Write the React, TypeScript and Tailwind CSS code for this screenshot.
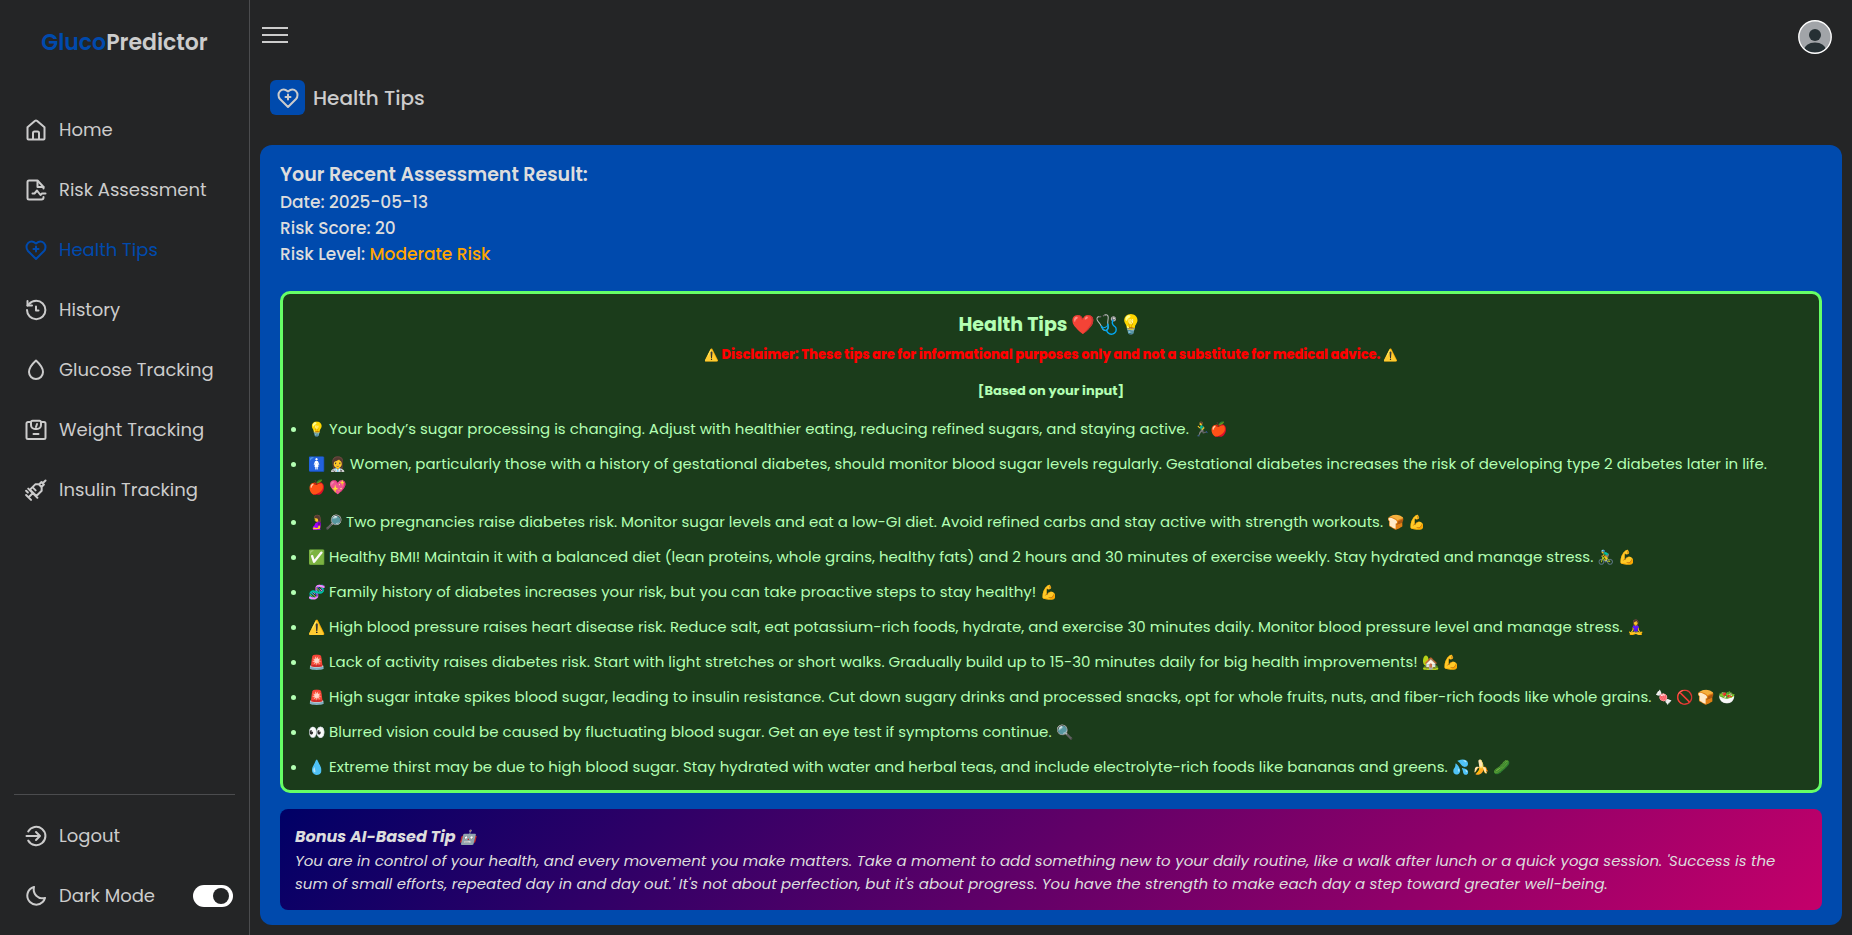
import { useState } from "react";
import type { ReactNode } from "react";
import { BiMoon } from "react-icons/bi";

function Icon({ children, className = "size-6" }: { children: ReactNode; className?: string }) {
  return (
    <svg
      viewBox="0 0 24 24"
      className={className}
      fill="none"
      stroke="currentColor"
      strokeWidth="2"
      strokeLinecap="round"
      strokeLinejoin="round"
      aria-hidden="true"
    >
      {children}
    </svg>
  );
}

const HomeIcon = () => (
  <Icon>
    <path d="M3.500 9.300 10.800 3a1.800 1.800 0 0 1 2.400 0l7.300 6.300V20.500a1 1 0 0 1-1 1h-15a1 1 0 0 1-1-1z" />
    <path d="M9 21v-6a1.500 1.500 0 0 1 1.500-1.500h3A1.500 1.500 0 0 1 15 15v6" />
  </Icon>
);

const RiskIcon = () => (
  <Icon>
    <path d="M19.500 10.500V9l-6-6.500H5A1.500 1.500 0 0 0 3.500 4v16A1.500 1.500 0 0 0 5 21.500h12.500a2 2 0 0 0 2-2V19" />
    <path d="M13.500 3v6h6" />
    <path d="M8.500 15.500h2l2.500-3 3.500 4.500 1.500-1.500h3.500" />
  </Icon>
);

const HeartPlusIcon = ({ className }: { className?: string }) => (
  <Icon className={className}>
    <path d="M12 21 4 13a5.800 5.800 0 0 1-1.500-4c0-3 2.300-5.500 5.200-5.500 1.700 0 2.800.8 4.300 2 1.500-1.200 2.600-2 4.300-2 2.900 0 5.200 2.500 5.200 5.500a5.800 5.800 0 0 1-1.500 4z" />
    <path d="M12 8.500v5M9.500 11h5" />
  </Icon>
);

const HistoryIcon = () => (
  <Icon>
    <path d="M3 12a9.200 9.200 0 1 0 9.200-9.200A9.700 9.700 0 0 0 5 6L3.500 7.500" />
    <path d="M3.500 3v4.500H8" />
    <path d="M12 8.500v4h2.500" />
  </Icon>
);

const DropIcon = () => (
  <Icon>
    <path d="M12 2.500c3 2.700 7 7.300 7 11.500a7 7 0 0 1-14 0c0-4.200 4-8.800 7-11.500z" />
  </Icon>
);

const ScaleIcon = () => (
  <Icon>
    <path d="M7 4H4a1.500 1.500 0 0 0-1.500 1.500v14A1.500 1.500 0 0 0 4 21h16a1.500 1.500 0 0 0 1.500-1.500v-14A1.500 1.500 0 0 0 20 4h-3" />
    <path d="M8.500 2.700h7a1.500 1.500 0 0 1 1.500 1.500V7a4 4 0 0 1-4 4h-2a4 4 0 0 1-4-4V4.200a1.500 1.500 0 0 1 1.500-1.500z" />
    <path d="m12 9 1-3M9.500 16h5" />
  </Icon>
);

const SyringeIcon = () => (
  <Icon>
    <g transform="rotate(45 12 12)">
      <path d="M12-1.500v4M10.300 2.500h3.400V6h-3.400zM7.500 8.500 10 6h4l2.500 2.500V16h-9zM12 16v6M8.500 22.500h7M5.500 16.500h13M8.500 12.500h3.500M5.500 19.500h2.500" />
    </g>
  </Icon>
);

const LogoutIcon = () => (
  <Icon>
    <path d="M4.200 7.500a9.200 9.200 0 1 1 0 9" />
    <path d="M2.500 12H16M12 8l4 4-4 4" />
  </Icon>
);

const navItems = [
  { label: "Home", icon: <HomeIcon /> },
  { label: "Risk Assessment", icon: <RiskIcon /> },
  { label: "Health Tips", icon: <HeartPlusIcon />, active: true },
  { label: "History", icon: <HistoryIcon /> },
  { label: "Glucose Tracking", icon: <DropIcon /> },
  { label: "Weight Tracking", icon: <ScaleIcon /> },
  { label: "Insulin Tracking", icon: <SyringeIcon /> },
];

const tips = [
  {
    lead: "💡",
    text: "Your body’s sugar processing is changing. Adjust with healthier eating, reducing refined sugars, and staying active.",
    tail: "🏃‍♂️🍎",
  },
  {
    lead: "🚺 👩‍⚕️",
    text: "Women, particularly those with a history of gestational diabetes, should monitor blood sugar levels regularly. Gestational diabetes increases the risk of developing type 2 diabetes later in life.",
    tail: "🍎 💖",
  },
  {
    lead: "🤰🔎",
    text: "Two pregnancies raise diabetes risk. Monitor sugar levels and eat a low-GI diet. Avoid refined carbs and stay active with strength workouts.",
    tail: "🍞 💪",
  },
  {
    lead: "✅",
    text: "Healthy BMI! Maintain it with a balanced diet (lean proteins, whole grains, healthy fats) and 2 hours and 30 minutes of exercise weekly. Stay hydrated and manage stress.",
    tail: "🚴‍♂️ 💪",
  },
  {
    lead: "🧬",
    text: "Family history of diabetes increases your risk, but you can take proactive steps to stay healthy!",
    tail: "💪",
  },
  {
    lead: "⚠️",
    text: "High blood pressure raises heart disease risk. Reduce salt, eat potassium-rich foods, hydrate, and exercise 30 minutes daily. Monitor blood pressure level and manage stress.",
    tail: "🧘‍♀️",
  },
  {
    lead: "🚨",
    text: "Lack of activity raises diabetes risk. Start with light stretches or short walks. Gradually build up to 15-30 minutes daily for big health improvements!",
    tail: "🏡 💪",
  },
  {
    lead: "🚨",
    text: "High sugar intake spikes blood sugar, leading to insulin resistance. Cut down sugary drinks and processed snacks, opt for whole fruits, nuts, and fiber-rich foods like whole grains.",
    tail: "🍬 🚫 🍞 🥗",
  },
  {
    lead: "👀",
    text: "Blurred vision could be caused by fluctuating blood sugar. Get an eye test if symptoms continue.",
    tail: "🔍",
  },
  {
    lead: "💧",
    text: "Extreme thirst may be due to high blood sugar. Stay hydrated with water and herbal teas, and include electrolyte-rich foods like bananas and greens.",
    tail: "💦 🍌 🥒",
  },
];

function Emoji({ children }: { children: ReactNode }) {
  return <span className="whitespace-nowrap text-sm leading-none">{children}</span>;
}

function Sidebar() {
  const [dark, setDark] = useState(true);
  return (
    <aside className="flex w-[250px] shrink-0 flex-col border-r border-[#4b4c4e]">
      <div className="flex h-[84px] items-center justify-center text-[22px] font-semibold">
        <span className="text-[#004aad]">Gluco</span>
        <span>Predictor</span>
      </div>
      <nav className="mt-4 grow">
        <ul>
          {navItems.map((item) => (
            <li key={item.label}>
              <a
                href="#"
                className={
                  item.active
                    ? "flex h-[60px] items-center gap-[11px] pl-6 text-lg text-[#004aad]"
                    : "flex h-[60px] items-center gap-[11px] pl-6 text-lg"
                }
              >
                {item.icon}
                {item.label}
              </a>
            </li>
          ))}
        </ul>
      </nav>
      <div className="mx-[14px] border-t border-[#4b4c4e] pt-[11px] pb-[9px]">
        <a href="#" className="flex h-[60px] items-center gap-[11px] pl-[10px] text-lg">
          <LogoutIcon />
          Logout
        </a>
        <label className="flex h-[60px] items-center gap-[11px] pl-[10px] text-lg">
          <BiMoon className="size-6" />
          <span className="grow">Dark Mode</span>
          <input
            type="checkbox"
            role="switch"
            checked={dark}
            onChange={(e) => setDark(e.target.checked)}
            className="mr-[2px] flex h-[22px] w-10 appearance-none items-center rounded-full bg-white px-1 before:size-4 before:rounded-full before:bg-[#242526] checked:justify-end"
          />
        </label>
      </div>
    </aside>
  );
}

export default function App() {
  return (
    <div className="flex min-h-screen bg-[#242526] font-['Poppins','Inter',sans-serif] text-[#cccccc]">
      <Sidebar />
      <main className="min-w-0 grow px-[10px] pb-[10px]">
        <header className="flex h-[74px] items-center justify-between pr-[10px]">
          <button type="button" aria-label="Toggle menu" className="flex w-[30px] flex-col gap-[5px] px-[2px] pb-1">
            <span className="h-[2px] w-full bg-current" />
            <span className="h-[2px] w-full bg-current" />
            <span className="h-[2px] w-full bg-current" />
          </button>
          <button type="button" aria-label="Profile">
            <svg viewBox="0 0 34 34" className="size-[34px]" aria-hidden="true">
              <clipPath id="avatar">
                <circle cx="17" cy="17" r="16" />
              </clipPath>
              <circle cx="17" cy="17" r="16" fill="#a1a4a8" />
              <g clipPath="url(#avatar)" fill="#263034">
                <circle cx="17" cy="15" r="6" />
                <ellipse cx="17" cy="30" rx="11" ry="7.500" />
              </g>
              <circle cx="17" cy="17" r="16.200" fill="none" stroke="#fff" strokeWidth="1.400" />
            </svg>
          </button>
        </header>

        <div className="mt-[6px] mb-[30px] flex items-center gap-2 pl-[10px]">
          <span className="flex size-[35px] items-center justify-center rounded-md bg-[#004aad]">
            <HeartPlusIcon className="size-6" />
          </span>
          <h1 className="text-xl leading-none font-medium">Health Tips</h1>
        </div>

        <section className="rounded-xl bg-[#004aad] px-5 pt-4 pb-[15px] text-[#dddddd]">
          <div className="mb-6 text-[17px] leading-[26px] font-medium">
            <h2 className="text-[19px] leading-7 font-semibold">Your Recent Assessment Result:</h2>
            <p>Date: 2025-05-13</p>
            <p>Risk Score: 20</p>
            <p>
              Risk Level: <span className="text-[#ffa500]">Moderate Risk</span>
            </p>
          </div>

          <div className="rounded-[10px] border-3 border-[#66ff66] bg-[#1b3c1b] pt-4 pb-3 text-[#b3ffb3]">
            <h2 className="text-center text-[19px] leading-[30px] font-bold">Health Tips ❤️🩺💡</h2>
            <p className="text-center text-[13px] leading-[30px] font-extrabold">
              <span className="text-xs leading-none">⚠️</span>{" "}
              <span className="text-[#ff0000]">
                Disclaimer: These tips are for informational purposes only and not a substitute for medical advice.
              </span>{" "}
              <span className="text-xs leading-none">⚠️</span>
            </p>
            <h3 className="mt-[9px] mb-[14px] text-center text-[13px] leading-6 font-bold">[Based on your input]</h3>
            <ul className="list-disc space-y-3 pr-3 pl-[25px] text-[15px] leading-[23px]">
              {tips.map((tip) => (
                <li key={tip.text}>
                  <Emoji>{tip.lead}</Emoji> {tip.text} <Emoji>{tip.tail}</Emoji>
                </li>
              ))}
            </ul>
          </div>

          <div className="mt-4 rounded-lg bg-[linear-gradient(135deg,#000066,#c4006a)] p-[15px] text-[15px] leading-[23px] italic">
            <h3 className="text-base leading-[25px] font-bold">
              Bonus AI-Based Tip <Emoji>🤖</Emoji>
            </h3>
            <p>
              You are in control of your health, and every movement you make matters. Take a moment to add something new to
              your daily routine, like a walk after lunch or a quick yoga session. 'Success is the sum of small efforts,
              repeated day in and day out.' It's not about perfection, but it's about progress. You have the strength to
              make each day a step toward greater well-being.
            </p>
          </div>
        </section>
      </main>
    </div>
  );
}
